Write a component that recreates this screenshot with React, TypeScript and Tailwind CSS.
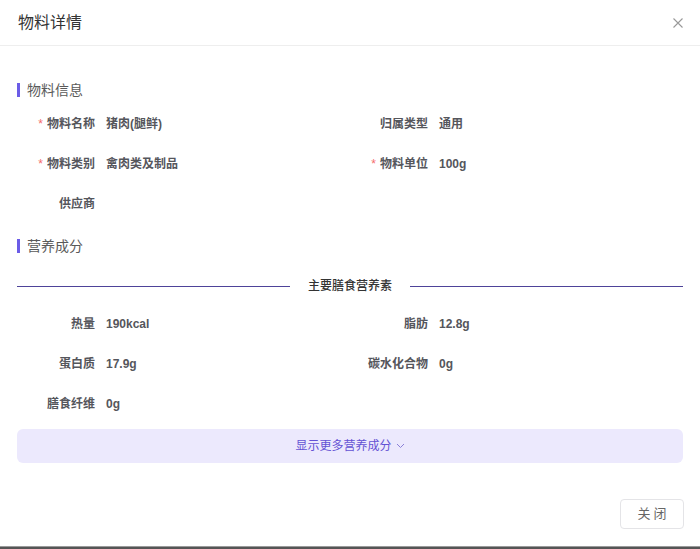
import React from 'react';

const FONT = "font-['Liberation_Sans','Noto_Sans_CJK_SC',sans-serif]";

interface FieldProps {
  label: string;
  value?: string;
  required?: boolean;
}

const Field: React.FC<FieldProps> = ({ label, value, required }) => (
  <div className="flex items-center h-[40px]">
    <div className="w-[78px] flex justify-end items-center text-[12px] font-bold text-[#55565c]">
      {required && <span className="text-[#f56c6c] mr-[4px] font-normal">*</span>}
      <span>{label}</span>
    </div>
    <div className="ml-[11px] text-[12px] font-bold text-[#55565c]">{value}</div>
  </div>
);

const SectionTitle: React.FC<{ title: string }> = ({ title }) => (
  <div className="flex items-center h-[18px]">
    <span className="w-[3px] h-[14px] bg-[#6b5ce7] mr-[7px]" />
    <span className="text-[14px] text-[#5a5a5a]">{title}</span>
  </div>
);

export default function App() {
  return (
    <div className={`w-[700px] h-[549px] bg-white flex flex-col ${FONT}`}>
      {/* Header */}
      <div className="h-[46px] flex items-center justify-between pl-[18px] pr-[17px] border-b border-[#eeeeee] shrink-0">
        <span className="text-[16px] text-[#333]">物料详情</span>
        <svg width="10" height="10" viewBox="0 0 10 10" className="text-[#999]">
          <path d="M0.5 0.5 L9.5 9.5 M9.5 0.5 L0.5 9.5" stroke="currentColor" strokeWidth="1.1" fill="none" />
        </svg>
      </div>

      {/* Body */}
      <div className="px-[17px] pt-[35px]">
        <SectionTitle title="物料信息" />
        <div className="grid grid-cols-2 mt-[5px]">
          <Field label="物料名称" value="猪肉(腿鲜)" required />
          <Field label="归属类型" value="通用" />
          <Field label="物料类别" value="禽肉类及制品" required />
          <Field label="物料单位" value="100g" required />
          <Field label="供应商" />
        </div>

        <div className="mt-[13px]">
          <SectionTitle title="营养成分" />
        </div>

        <div className="flex items-center h-[20px] mt-[21px]">
          <div className="flex-1 h-px bg-[#4e4399]" />
          <span className="px-[18px] text-[12px] font-medium text-[#333]">主要膳食营养素</span>
          <div className="flex-1 h-px bg-[#4e4399]" />
        </div>

        <div className="grid grid-cols-2 mt-[8px]">
          <Field label="热量" value="190kcal" />
          <Field label="脂肪" value="12.8g" />
          <Field label="蛋白质" value="17.9g" />
          <Field label="碳水化合物" value="0g" />
          <Field label="膳食纤维" value="0g" />
        </div>

        <button className="mt-[5px] w-full h-[34px] rounded-[6px] bg-[#ece9fd] flex items-center justify-center text-[12px] text-[#6452d4]">
          显示更多营养成分
          <svg width="9" height="6" viewBox="0 0 9 6" className="ml-[4px] text-[#8b80d8]">
            <path d="M1 1 L4.5 4.5 L8 1" stroke="currentColor" strokeWidth="1" fill="none" />
          </svg>
        </button>
      </div>

      {/* Footer */}
      <div className="flex justify-end pr-[16px] mt-[36px]">
        <button className="w-[64px] h-[30px] border border-[#e4e4e7] rounded-[4px] text-[13px] text-[#666] tracking-[3px] pl-[3px]">
          关闭
        </button>
      </div>

      <div className="flex-1" />
      <div className="h-px bg-[#9a9a9a]" />
      <div className="h-[2px] bg-[#555]" />
    </div>
  );
}
